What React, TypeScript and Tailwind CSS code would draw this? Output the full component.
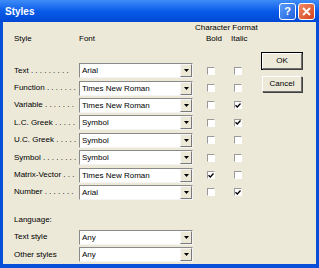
import React from "react";

const rows = [
  { label: "Text . . . . . . . . .", font: "Arial", bold: false, italic: false },
  { label: "Function . . . . . . .", font: "Times New Roman", bold: false, italic: false },
  { label: "Variable . . . . . . .", font: "Times New Roman", bold: false, italic: true },
  { label: "L.C. Greek . . . . .", font: "Symbol", bold: false, italic: true },
  { label: "U.C. Greek . . . . .", font: "Symbol", bold: false, italic: false },
  { label: "Symbol . . . . . . . .", font: "Symbol", bold: false, italic: false },
  { label: "Matrix-Vector . . .", font: "Times New Roman", bold: true, italic: false },
  { label: "Number . . . . . . .", font: "Arial", bold: false, italic: true },
];

function Combo({ value }: { value: string }) {
  return (
    <div className="flex h-[15px] w-[114px] items-stretch border border-t-[#8a8a8a] border-l-[#8a8a8a] border-r-[#f4f4f4] border-b-[#f4f4f4] bg-white">
      <span className="flex-1 pl-[2px] leading-[13px]">{value}</span>
      <span className="flex w-[12px] items-center justify-center border border-t-[#f6f6f6] border-l-[#f6f6f6] border-r-[#7a7a7a] border-b-[#7a7a7a] bg-[#ece9d8]">
        <svg width="5" height="3" viewBox="0 0 5 3">
          <path d="M0 0h5L2.5 3z" fill="#000" />
        </svg>
      </span>
    </div>
  );
}

function Check({ on }: { on: boolean }) {
  return (
    <div className="flex h-[8px] w-[8px] items-center justify-center border border-t-[#9a9a9a] border-l-[#9a9a9a] border-r-white border-b-white bg-white">
      {on && (
        <svg width="6" height="5" viewBox="0 0 6 5">
          <path d="M0.5 2.2l1.8 1.8 3.2-3.5" stroke="#000" strokeWidth="1.3" fill="none" />
        </svg>
      )}
    </div>
  );
}

function XPButton({ children }: { children: React.ReactNode }) {
  return (
    <div className="flex h-[16px] w-[40px] items-center justify-center border border-t-white border-l-white border-r-[#6f6f6f] border-b-[#6f6f6f] bg-[#ece9d8] shadow-[1px_1px_0_#404040]">
      {children}
    </div>
  );
}

export default function App() {
  return (
    <div
      className="flex h-[268px] w-[319px] flex-col bg-[#0a4fd8] text-[8px] text-black"
      style={{ fontFamily: '"Liberation Sans", Arial, sans-serif' }}
    >
      <div className="flex h-[22px] items-center bg-gradient-to-b from-[#3d8cf7] via-[#0a5bea] to-[#0048d4] pl-[5px] pr-[4px]">
        <span className="flex-1 text-[10px] font-bold text-white">Styles</span>
        <div className="flex gap-[2px]">
          <div className="flex h-[17px] w-[17px] items-center justify-center rounded-[3px] border border-white bg-gradient-to-br from-[#5b9cf8] to-[#1f5fe0] text-[11px] font-bold text-white">
            ?
          </div>
          <div className="flex h-[17px] w-[17px] items-center justify-center rounded-[3px] border border-white bg-gradient-to-br from-[#f08a60] to-[#d2401a]">
            <svg width="9" height="9" viewBox="0 0 9 9">
              <path d="M1 1l7 7M8 1L1 8" stroke="#fff" strokeWidth="1.8" />
            </svg>
          </div>
        </div>
      </div>

      <div className="mx-[3px] mb-[4px] flex flex-1 bg-[#ece9d8]">
        <div className="flex w-[252px] flex-col pl-[11px] pt-[1px]">
          <div className="h-[10px] whitespace-nowrap pl-[181px] leading-[10px]">Character Format</div>
          <div className="flex h-[12px] items-center">
            <span className="w-[65px]">Style</span>
            <span className="w-[127px]">Font</span>
            <span className="w-[25px]">Bold</span>
            <span>Italic</span>
          </div>
          <div className="h-[17px]" />
          {rows.map((r) => (
            <div key={r.label} className="flex h-[17.4px] items-center">
              <span className="w-[65px] whitespace-nowrap">{r.label}</span>
              <Combo value={r.font} />
              <div className="ml-[14px]">
                <Check on={r.bold} />
              </div>
              <div className="ml-[19px]">
                <Check on={r.italic} />
              </div>
            </div>
          ))}
          <div className="mt-[10px] flex h-[17.4px] items-center">Language:</div>
          <div className="flex h-[17.4px] items-center">
            <span className="w-[65px]">Text style</span>
            <Combo value="Any" />
          </div>
          <div className="flex h-[17.4px] items-center">
            <span className="w-[65px]">Other styles</span>
            <Combo value="Any" />
          </div>
        </div>
        <div className="flex flex-col gap-[6px] pl-[6px] pt-[30px]">
          <div className="border border-black">
            <XPButton>OK</XPButton>
          </div>
          <div className="pl-[1px]">
            <XPButton>Cancel</XPButton>
          </div>
        </div>
      </div>
    </div>
  );
}
